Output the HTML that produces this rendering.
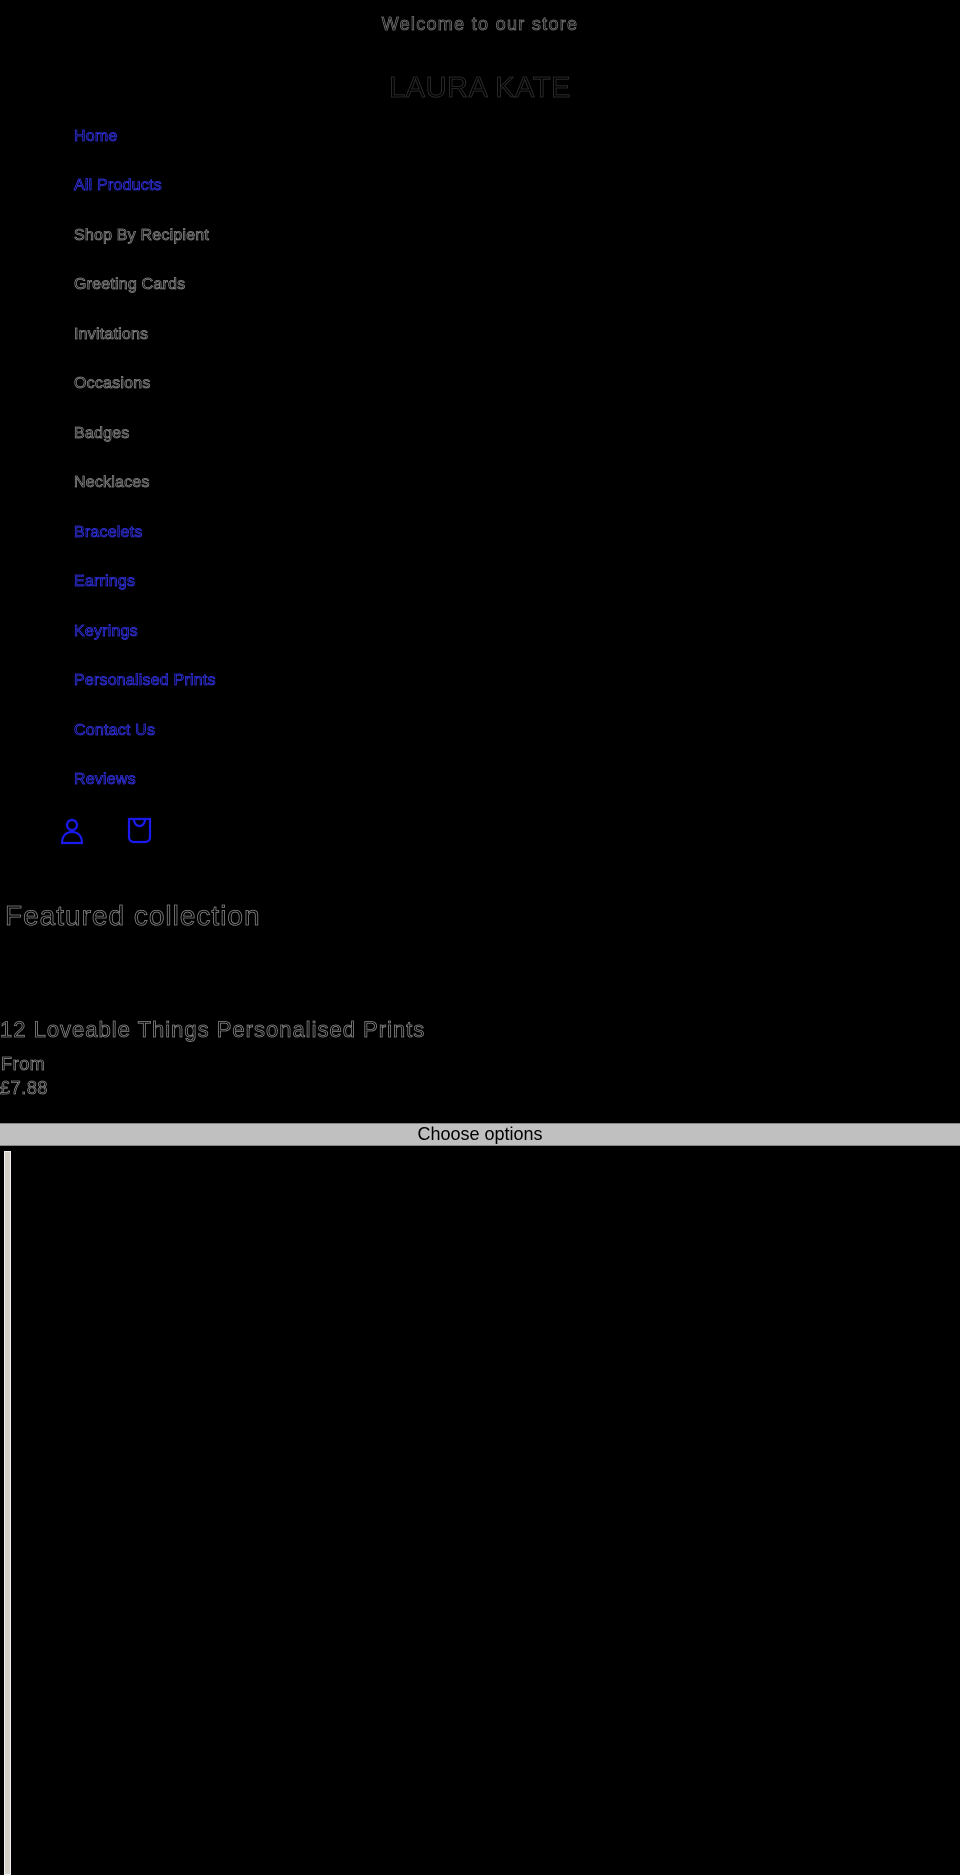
<!DOCTYPE html>
<html><head><meta charset="utf-8"><style>
html,body{margin:0;padding:0;background:#000;width:960px;height:1875px;overflow:hidden;font-family:"Liberation Sans",sans-serif}
.t{position:absolute;white-space:nowrap;color:#000;-webkit-text-stroke:0.8px #777}
.g{-webkit-text-stroke:0.8px #888}
.b{-webkit-text-stroke:0.8px #3333ee;color:#000}
.nav{position:absolute;left:74px;font-size:16px;line-height:20px;letter-spacing:0.2px}
</style></head><body>
<div class="t" style="left:0;width:960px;text-align:center;top:13px;font-size:18px;line-height:22px;letter-spacing:1.3px">Welcome to our store</div>
<div class="t" style="left:0;width:960px;text-align:center;top:71px;font-size:29px;line-height:34px;letter-spacing:0.5px;-webkit-text-stroke:0.8px #333">LAURA KATE</div>
<div class="t nav b" style="top:127px">Home</div>
<div class="t nav b" style="top:176px">All Products</div>
<div class="t nav g" style="top:226px">Shop By Recipient</div>
<div class="t nav g" style="top:275px">Greeting Cards</div>
<div class="t nav g" style="top:325px">Invitations</div>
<div class="t nav g" style="top:374px">Occasions</div>
<div class="t nav g" style="top:424px">Badges</div>
<div class="t nav g" style="top:473px">Necklaces</div>
<div class="t nav b" style="top:523px">Bracelets</div>
<div class="t nav b" style="top:572px">Earrings</div>
<div class="t nav b" style="top:622px">Keyrings</div>
<div class="t nav b" style="top:671px">Personalised Prints</div>
<div class="t nav b" style="top:721px">Contact Us</div>
<div class="t nav b" style="top:770px">Reviews</div>
<svg style="position:absolute;left:58px;top:815px" width="30" height="32" viewBox="0 0 30 32" fill="none" stroke="#1a1aee" stroke-width="2.2">
<circle cx="14" cy="10" r="5"/><path d="M4 28 C4 20 9 17 14 17 C19 17 24 20 24 28 Z"/></svg>
<svg style="position:absolute;left:125px;top:815px" width="30" height="32" viewBox="0 0 30 32" fill="none" stroke="#1a1aee" stroke-width="2.2">
<path d="M4 4 H25 V22 C25 25 23 27 20 27 H9 C6 27 4 25 4 22 Z"/><path d="M9 4 C9 9 12 11 14.5 11 C17 11 20 9 20 4"/></svg>
<div class="t g" style="left:5px;top:900px;font-size:28px;line-height:32px;letter-spacing:1px">Featured collection</div>
<div class="t g" style="left:0;top:1017px;font-size:22px;line-height:26px;letter-spacing:1px">12 Loveable Things Personalised Prints</div>
<div class="t g" style="left:1px;top:1053px;font-size:18px;line-height:22px;letter-spacing:0.6px">From</div>
<div class="t g" style="left:0;top:1077px;font-size:18px;line-height:22px;letter-spacing:0.6px">£7.88</div>
<div style="position:absolute;left:0;top:1123px;width:960px;height:21px;background:#c0c0c0;border-top:1px solid #888;border-bottom:1px solid #888;text-align:center;font-size:18px;line-height:21px;color:#000">Choose options</div>
<div style="position:absolute;left:4px;top:1151px;width:7px;height:724px;background:#d4d0c8;border:1px solid #eee;box-sizing:border-box"></div>
</body></html>
